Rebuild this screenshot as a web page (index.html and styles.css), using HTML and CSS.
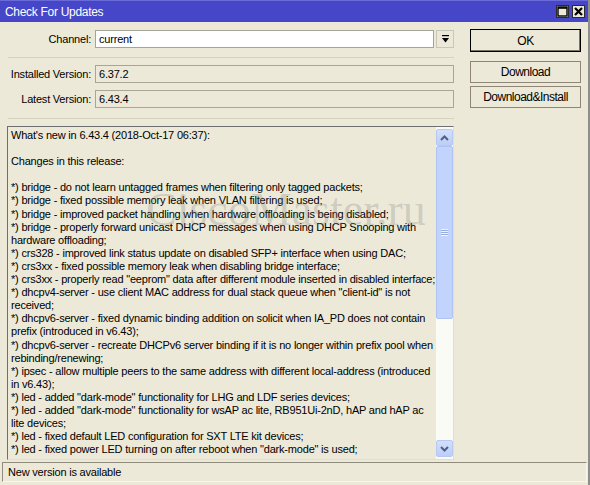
FILE: index.html
```html
<!DOCTYPE html>
<html>
<head>
<meta charset="utf-8">
<link rel="stylesheet" href="styles.css">
</head>
<body>
<div class="window">
  <div class="titlebar">
    <span class="title">Check For Updates</span>
    <div class="tb-buttons">
      <span class="tb-btn"><svg width="11" height="11" viewBox="0 0 11 11"><rect x="1" y="1" width="9" height="9" fill="none" stroke="#000" stroke-width="1.4"/><line x1="1" y1="2" x2="10" y2="2" stroke="#000" stroke-width="1.6"/></svg></span>
      <span class="tb-btn"><svg width="11" height="11" viewBox="0 0 11 11"><path d="M2 2 L9 9 M9 2 L2 9" stroke="#000" stroke-width="2.2"/></svg></span>
    </div>
  </div>
  <div class="content">
    <div class="left">
      <div class="row row-channel">
        <label class="lbl">Channel:</label>
        <div class="input">current</div>
        <div class="dd"><svg width="9" height="10" viewBox="0 0 9 10"><rect x="1" y="1" width="7" height="1.2" fill="#000"/><path d="M1 4 H8 L4.5 8.5 Z" fill="#000"/></svg></div>
      </div>
      <div class="sep"></div>
      <div class="row row-ver">
        <label class="lbl">Installed Version:</label>
        <div class="field">6.37.2</div>
      </div>
      <div class="row row-ver2">
        <label class="lbl">Latest Version:</label>
        <div class="field">6.43.4</div>
      </div>
      <div class="sep sep2"></div>
      <div class="textarea">
        <div class="text">What's new in 6.43.4 (2018-Oct-17 06:37):

Changes in this release:

*) bridge - do not learn untagged frames when filtering only tagged packets;
*) bridge - fixed possible memory leak when VLAN filtering is used;
*) bridge - improved packet handling when hardware offloading is being disabled;
*) bridge - properly forward unicast DHCP messages when using DHCP Snooping with
hardware offloading;
*) crs328 - improved link status update on disabled SFP+ interface when using DAC;
*) crs3xx - fixed possible memory leak when disabling bridge interface;
*) crs3xx - properly read "eeprom" data after different module inserted in disabled interface;
*) dhcpv4-server - use client MAC address for dual stack queue when "client-id" is not
received;
*) dhcpv6-server - fixed dynamic binding addition on solicit when IA_PD does not contain
prefix (introduced in v6.43);
*) dhcpv6-server - recreate DHCPv6 server binding if it is no longer within prefix pool when
rebinding/renewing;
*) ipsec - allow multiple peers to the same address with different local-address (introduced
in v6.43);
*) led - added "dark-mode" functionality for LHG and LDF series devices;
*) led - added "dark-mode" functionality for wsAP ac lite, RB951Ui-2nD, hAP and hAP ac
lite devices;
*) led - fixed default LED configuration for SXT LTE kit devices;
*) led - fixed power LED turning on after reboot when "dark-mode" is used;</div>
        <div class="scrollbar">
          <div class="sb-btn"><svg width="9" height="6" viewBox="0 0 9 6"><path d="M1 5 L4.5 1.5 L8 5" fill="none" stroke="#4D6185" stroke-width="2"/></svg></div>
          <div class="sb-thumb"><div class="grip"></div></div>
          <div class="sb-track"></div>
          <div class="sb-btn"><svg width="9" height="6" viewBox="0 0 9 6"><path d="M1 1 L4.5 4.5 L8 1" fill="none" stroke="#4D6185" stroke-width="2"/></svg></div>
        </div>
        <div class="watermark">CiscoMaster.ru</div>
      </div>
    </div>
    <div class="right">
      <div class="btn btn-ok">OK</div>
      <div class="btn btn-dl">Download</div>
      <div class="btn btn-di">Download&amp;Install</div>
    </div>
  </div>
  <div class="status">New version is available</div>
</div>
</body>
</html>
```
FILE: styles.css
```css
* { box-sizing: border-box; }
html, body { margin: 0; padding: 0; }
body {
  width: 590px;
  height: 485px;
  overflow: hidden;
  font-family: "Liberation Sans", Arial, sans-serif;
  font-size: 11px;
  letter-spacing: -0.2px;
  color: #000;
}
.window {
  width: 590px;
  height: 485px;
  background: #ECE9D8;
  border-right: 2px solid #8E8E8E;
  display: flex;
  flex-direction: column;
}
.titlebar {
  height: 22px;
  flex: none;
  background: #4646C8;
  border-top: 1px solid #6A6AD8;
  display: flex;
  align-items: center;
  justify-content: space-between;
  padding: 0 3px 0 5px;
  color: #fff;
  font-size: 12px;
  letter-spacing: -0.3px;
}
.tb-buttons { display: flex; gap: 3px; }
.tb-btn {
  width: 13px;
  height: 13px;
  background: #ECE9D8;
  border: 1px solid #2a2a2a;
  display: flex;
  align-items: center;
  justify-content: center;
}
.content {
  display: flex;
  gap: 16px;
  padding: 0 0 0 7px;
  flex: 1;
  min-height: 0;
}
.left {
  width: 447px;
  display: flex;
  flex-direction: column;
}
.row { display: flex; align-items: center; height: 18px; }
.row-channel { margin-top: 8px; }
.row-ver { margin-top: 7px; }
.row-ver2 { margin-top: 7px; }
.lbl {
  width: 84px;
  text-align: right;
  margin-right: 4px;
  white-space: nowrap;
}
.input {
  flex: 1;
  height: 18px;
  background: #fff;
  border: 1px solid #A5A597;
  padding: 2px 0 0 3px;
}
.dd {
  width: 18px;
  height: 18px;
  margin-left: 2px;
  border: 1px solid #C9C6B5;
  background: #ECE9D8;
  display: flex;
  align-items: center;
  justify-content: center;
}
.field {
  flex: 1;
  height: 18px;
  border: 1px solid #A8A699;
  padding: 2px 0 0 3px;
}
.sep {
  height: 1px;
  background: #D5D2C1;
  margin: 9px 0 0 1px;
}
.sep2 { margin-top: 10px; }
.textarea {
  position: relative;
  margin-top: 7px;
  height: 334px;
  border-top: 1px solid #6F6F6F;
  border-left: 1px solid #6F6F6F;
  border-right: 1px solid #E2DFCF;
  border-bottom: 1px solid #E2DFCF;
  display: flex;
  overflow: hidden;
}
.text {
  flex: 1;
  white-space: pre;
  line-height: 13.1px;
  padding: 2px 0 0 3px;
  overflow: hidden;
}
.scrollbar {
  width: 17px;
  flex: none;
  display: flex;
  flex-direction: column;
  padding: 2px 0 2px 0;
  background: #FBFBF6;
}
.sb-btn {
  height: 17px;
  flex: none;
  background: linear-gradient(#D3DFFC, #BCCDF7);
  border: 1px solid #B6C9F3;
  border-radius: 2px;
  display: flex;
  align-items: center;
  justify-content: center;
}
.sb-thumb {
  height: 173px;
  flex: none;
  background: #C3D4FC;
  border: 1px solid #AEC3F2;
  border-radius: 2px;
  display: flex;
  align-items: center;
  justify-content: center;
}
.grip {
  width: 7px;
  height: 7px;
  background: repeating-linear-gradient(#EEF3FF 0 1px, #98AEE0 1px 2px);
}
.sb-track { flex: 1; }
.watermark {
  position: absolute;
  left: 138px;
  top: 56px;
  font-family: "Liberation Serif", "Times New Roman", serif;
  font-size: 46px;
  letter-spacing: 0;
  color: rgba(120, 120, 120, 0.26);
  pointer-events: none;
  white-space: nowrap;
}
.right {
  width: 111px;
  display: flex;
  flex-direction: column;
}
.btn {
  height: 22px;
  border: 1px solid #8E8576;
  display: flex;
  align-items: center;
  justify-content: center;
  font-size: 12px;
  letter-spacing: -0.5px;
}
.btn-ok {
  margin-top: 7px;
  height: 23px;
  border: 1px solid #000;
  box-shadow: inset -1px -1px 0 #7A7466;
}
.btn-dl { margin-top: 9px; }
.btn-di { margin-top: 3px; }
.status {
  height: 20px;
  flex: none;
  margin: 0 1px 3px 2px;
  border-top: 1px solid #8F8C7E;
  border-left: 1px solid #8F8C7E;
  border-right: 1px solid #F8F7F0;
  border-bottom: 1px solid #F8F7F0;
  padding: 3px 0 0 5px;
}
```
